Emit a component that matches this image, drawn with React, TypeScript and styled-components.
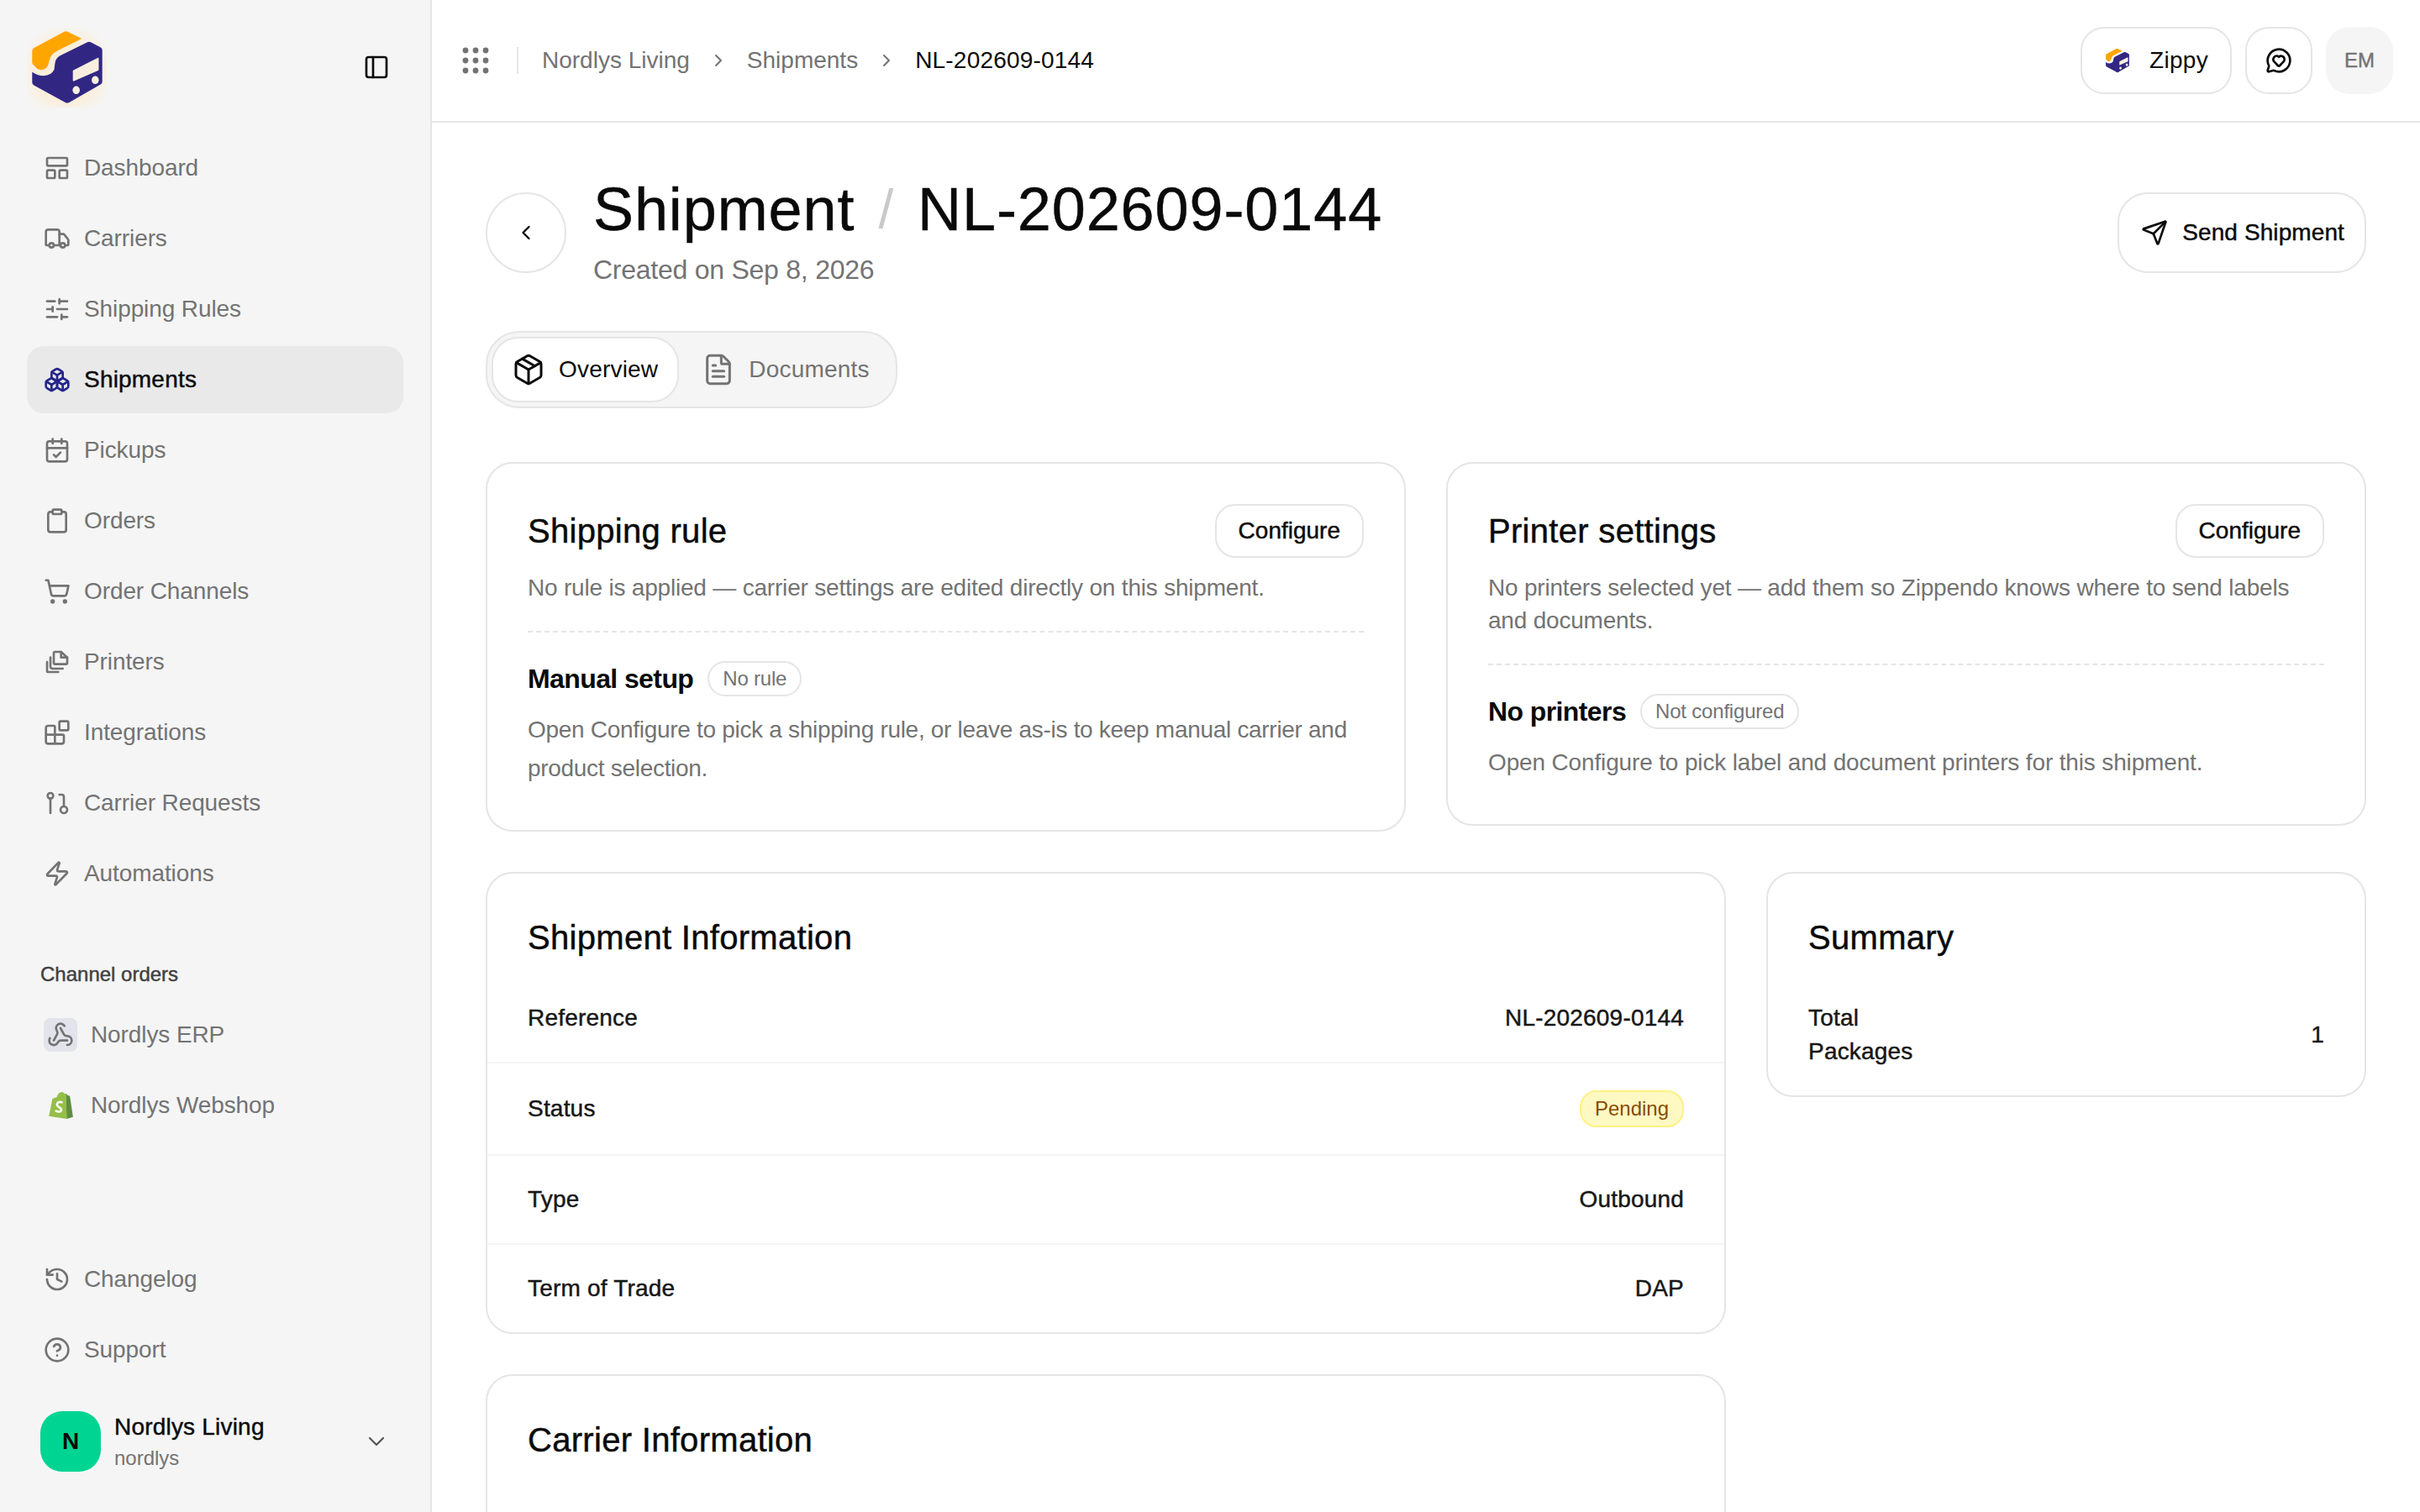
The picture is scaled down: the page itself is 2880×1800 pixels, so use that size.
import styled, { createGlobalStyle, css } from "styled-components";
import {
  Blocks,
  Boxes,
  CalendarCheck,
  ChevronDown,
  ChevronLeft,
  ChevronRight,
  CircleHelp,
  Clipboard,
  FileText,
  History,
  MessageCircleHeart,
  Package,
  PanelLeft,
  Send,
  ShoppingCart,
  SlidersHorizontal,
  Truck,
  Webhook,
  Zap,
} from "lucide-react";
import type { ReactNode } from "react";

const GlobalStyle = createGlobalStyle`
  html, body {
    margin: 0;
    padding: 0;
    background: #ffffff;
    overflow: hidden;
  }
  body {
    font-family: "Liberation Sans", Arial, sans-serif;
    color: #0a0a0a;
  }
  * {
    box-sizing: border-box;
  }
`;

// Liberation has no 500 weight, a hairline stroke stands in for it
const medium = css`
  -webkit-text-stroke: 0.45px currentColor;
`;

const Page = styled.div`
  display: flex;
  width: 2880px;
  height: 1800px;
  overflow: hidden;
`;

const Sidebar = styled.aside`
  flex: none;
  display: flex;
  flex-direction: column;
  width: 514px;
  height: 100%;
  background: #f5f5f5;
  border-right: 2px solid #e5e5e5;
`;

const SidebarHead = styled.div`
  flex: none;
  display: flex;
  align-items: center;
  justify-content: space-between;
  height: 160px;
  padding: 0 48px 0 32px;
  color: #0a0a0a;
`;

const NavList = styled.nav`
  display: flex;
  flex-direction: column;
  gap: 4px;
  padding: 0 32px;
`;

const NavItem = styled.a<{ $active?: boolean }>`
  display: flex;
  align-items: center;
  gap: 16px;
  height: 80px;
  padding: 0 20px;
  border-radius: 20px;
  font-size: 28px;
  letter-spacing: ${(p) => (p.$active ? "0.2px" : "-0.1px")};
  color: ${(p) => (p.$active ? "#0a0a0a" : "#737373")};
  background: ${(p) => (p.$active ? "#e9e9e9" : "transparent")};
  ${(p) => p.$active && medium}

  svg {
    flex: none;
    color: ${(p) => (p.$active ? "#25258c" : "#737373")};
  }
`;

const SectionLabel = styled.div`
  padding: 63px 48px 15px;
  font-size: 24px;
  line-height: 34px;
  color: #404040;
  ${medium}
`;

const ErpBadge = styled.span`
  flex: none;
  display: flex;
  align-items: center;
  justify-content: center;
  width: 40px;
  height: 40px;
  border-radius: 8px;
  background: #e2e3eb;
`;

const ShopifyBox = styled.span`
  flex: none;
  display: flex;
  align-items: center;
  justify-content: center;
  width: 40px;
  height: 40px;
`;

const SidebarFoot = styled.div`
  margin-top: auto;
  display: flex;
  flex-direction: column;
`;

const UserRow = styled.div`
  display: flex;
  align-items: center;
  gap: 16px;
  padding: 33px 48px 48px;
`;

const Avatar = styled.div`
  flex: none;
  display: flex;
  align-items: center;
  justify-content: center;
  width: 72px;
  height: 72px;
  border-radius: 26px;
  background: #00d492;
  font-size: 28px;
  font-weight: 700;
  color: #0a0a0a;
`;

const UserText = styled.div`
  flex: 1;
  display: flex;
  flex-direction: column;
  gap: 3px;
`;

const UserName = styled.div`
  font-size: 28px;
  line-height: 36px;
  letter-spacing: 0.2px;
  ${medium}
`;

const UserSlug = styled.div`
  font-size: 24px;
  line-height: 32px;
  color: #737373;
`;

const UserChevron = styled.span`
  display: flex;
  color: #525252;
`;

const Content = styled.div`
  flex: 1;
  min-width: 0;
  display: flex;
  flex-direction: column;
  height: 100%;
`;

const TopBar = styled.header`
  flex: none;
  display: flex;
  align-items: center;
  height: 146px;
  padding: 0 32px 0 36px;
  border-bottom: 2px solid #e5e5e5;
`;

const GridIcon = styled.span`
  display: flex;
  color: #737373;
`;

const BarDivider = styled.span`
  width: 2px;
  height: 32px;
  margin: 0 28px 0 33px;
  background: #e5e5e5;
`;

const Crumbs = styled.div`
  display: flex;
  align-items: center;
  gap: 22px;
  font-size: 28px;
  color: #737373;

  svg {
    color: #737373;
  }
`;

const CurrentCrumb = styled.span`
  color: #0a0a0a;
  letter-spacing: 0.2px;
`;

const BarActions = styled.div`
  margin-left: auto;
  display: flex;
  align-items: center;
  gap: 16px;
`;

const BarButton = styled.button<{ $square?: boolean }>`
  display: flex;
  align-items: center;
  justify-content: center;
  gap: 22px;
  height: 80px;
  width: ${(p) => (p.$square ? "80px" : "180px")};
  padding: 0;
  border: 2px solid #e5e5e5;
  border-radius: 28px;
  background: #ffffff;
  font: inherit;
  font-size: 28px;
  letter-spacing: 0.3px;
  color: #0a0a0a;
`;

const Initials = styled.div`
  display: flex;
  align-items: center;
  justify-content: center;
  width: 80px;
  height: 80px;
  border-radius: 28px;
  background: #f5f5f5;
  font-size: 24px;
  color: #737373;
  ${medium}
`;

const Main = styled.main`
  flex: 1;
  min-height: 0;
  overflow: hidden;
  padding: 63px 64px 0;
`;

const PageHeader = styled.div`
  display: flex;
  align-items: center;
  gap: 32px;
`;

const BackButton = styled.button`
  flex: none;
  display: flex;
  align-items: center;
  justify-content: center;
  width: 96px;
  height: 96px;
  padding: 0;
  border: 2px solid #e5e5e5;
  border-radius: 50%;
  background: #ffffff;
  color: #0a0a0a;
`;

const TitleBlock = styled.div`
  flex: 1;
`;

const TitleRow = styled.h1`
  display: flex;
  align-items: center;
  gap: 28px;
  margin: 0;
  font-size: 72px;
  font-weight: 400;
  line-height: 80px;
  letter-spacing: 0.9px;
  ${medium}
`;

const TitleSlash = styled.span`
  font-size: 64px;
  color: #c9c9c9;
  -webkit-text-stroke: 0;
`;

const Created = styled.p`
  margin: 8px 0 0;
  font-size: 32px;
  line-height: 48px;
  letter-spacing: -0.25px;
  color: #737373;
`;

const PrimaryAction = styled.button`
  flex: none;
  display: flex;
  align-items: center;
  gap: 17px;
  height: 96px;
  padding: 0 24px 0 26px;
  border: 2px solid #e5e5e5;
  border-radius: 36px;
  background: #ffffff;
  font: inherit;
  font-size: 28px;
  letter-spacing: 0.1px;
  color: #0a0a0a;
  ${medium}
`;

const Tabs = styled.div`
  display: inline-flex;
  align-items: center;
  gap: 4px;
  height: 92px;
  margin-top: 49px;
  padding: 0 5px;
  border: 2px solid #e5e5e5;
  border-radius: 40px;
  background: #f5f5f5;
`;

const Tab = styled.div<{ $active?: boolean }>`
  display: flex;
  align-items: center;
  gap: 16px;
  height: 78px;
  padding: ${(p) => (p.$active ? "0 23px 0 22px" : "0 24px 0 21px")};
  border: 2px solid ${(p) => (p.$active ? "#e5e5e5" : "transparent")};
  border-radius: 32px;
  background: ${(p) => (p.$active ? "#ffffff" : "transparent")};
  font-size: 28px;
  letter-spacing: 0.2px;
  color: ${(p) => (p.$active ? "#0a0a0a" : "#737373")};
`;

const TopCards = styled.div`
  display: grid;
  grid-template-columns: 1fr 1fr;
  align-items: start;
  gap: 48px;
  margin-top: 64px;
`;

const InfoCards = styled.div`
  display: grid;
  grid-template-columns: 1fr 714px;
  align-items: start;
  gap: 48px;
  margin-top: 48px;
`;

const InfoColumn = styled.div`
  display: flex;
  flex-direction: column;
  gap: 48px;
`;

const Card = styled.section`
  border: 2px solid #e5e5e5;
  border-radius: 32px;
  background: #ffffff;
`;

const SettingCard = styled(Card)`
  padding: 48px;
`;

const CardHead = styled.div`
  display: flex;
  align-items: center;
  justify-content: space-between;
`;

const CardTitle = styled.h2`
  margin: 0;
  font-size: 40px;
  font-weight: 400;
  line-height: 56px;
  letter-spacing: 0.3px;
  ${medium}
`;

const ConfigureButton = styled.button`
  flex: none;
  height: 64px;
  padding: 0 26px;
  border: 2px solid #e5e5e5;
  border-radius: 24px;
  background: #ffffff;
  font: inherit;
  font-size: 28px;
  color: #0a0a0a;
  ${medium}
`;

const CardNote = styled.p`
  margin: 16px 0 0;
  padding-bottom: 32px;
  border-bottom: 2px dashed #e5e5e5;
  font-size: 28px;
  line-height: 39.2px;
  letter-spacing: -0.2px;
  color: #737373;
`;

const StateRow = styled.div`
  display: flex;
  align-items: center;
  gap: 17px;
  margin-top: 34px;
`;

const StateName = styled.span`
  font-size: 32px;
  font-weight: 700;
  letter-spacing: -0.6px;
`;

const OutlinePill = styled.span`
  display: inline-flex;
  align-items: center;
  height: 42px;
  padding: 0 16px;
  border: 2px solid #e5e5e5;
  border-radius: 21px;
  font-size: 24px;
  letter-spacing: -0.2px;
  color: #737373;
`;

const StateHint = styled.p<{ $tight?: boolean }>`
  margin: 17px 0 0;
  padding-bottom: 2px;
  font-size: 28px;
  line-height: 46px;
  letter-spacing: ${(p) => (p.$tight ? "-0.3px" : "-0.15px")};
  color: #737373;
`;

const InfoHead = styled.div`
  padding: 48px 48px 16px;
`;

const InfoRow = styled.div`
  display: flex;
  align-items: center;
  justify-content: space-between;
  padding: 32px 48px;
  border-bottom: 2px solid #f5f5f5;

  &:last-child {
    border-bottom: 0;
  }
`;

const InfoText = styled.span<{ $narrow?: boolean }>`
  font-size: 28px;
  line-height: 40px;
  letter-spacing: 0.2px;
  color: #171717;
  ${medium}
  ${(p) => p.$narrow && "width: 160px;"}
`;

const StatusPill = styled.span`
  display: inline-flex;
  align-items: center;
  height: 44px;
  padding: 0 16px;
  border: 2px solid #fff085;
  border-radius: 20px;
  background: #fef9c2;
  font-size: 24px;
  color: #894b00;
`;

const CarrierCard = styled(Card)`
  height: 300px;
`;

function Logo({ size, glow }: { size: number; glow?: boolean }) {
  return (
    <svg width={size} height={size} viewBox="0 0 96 96">
      {glow && (
        <>
          <defs>
            <radialGradient id="logoGlow" cx="50%" cy="55%" r="60%">
              <stop offset="60%" stopColor="#fbeeda" />
              <stop offset="100%" stopColor="#f5f5f5" />
            </radialGradient>
          </defs>
          <rect width="96" height="96" fill="url(#logoGlow)" />
        </>
      )}
      <path
        d="M8.500 25 44 6q2.600-1.300 5 0l16.300 8L36 28.500q-5 2.500-8 7.500l-2 6.500q-1 6.500-6.500 8.300-3.500 1-7-.8L8.500 46q-2.200-1.300-2.200-3.500V28.500q0-2.300 2.200-3.500Z"
        fill="#ffa500"
      />
      <path
        d="M72 18.200q2-1 4 0l11.500 6q2.200 1.200 2.200 3.500v37.600q0 2.200-2 3.300L50.300 90q-2.300 1.200-4.600 0L8.300 69.500q-2-1.200-2-3.200V53.700q7 4.500 13.500 4.500 9.500-.5 12.700-7.500l.8-6.500q.6-6.500 5.700-9.700Z"
        fill="#312783"
      />
      <path
        d="M56 51.200 84 37q1.500-.6 1.500 1v12.800q0 .8-.8 1.200L56 64.500q-1.300.5-1.300-1V52.500q0-.9 1.300-1.300Z"
        fill="#f8eee0"
      />
      <ellipse cx="58.700" cy="75.300" rx="4.300" ry="4.800" fill="#f8eee0" />
      <ellipse cx="81.300" cy="63.300" rx="4.300" ry="4.800" fill="#f8eee0" />
    </svg>
  );
}

function DashboardIcon() {
  return (
    <svg width="32" height="32" viewBox="0 0 24 24" fill="none" stroke="currentColor" strokeWidth="2" strokeLinejoin="round">
      <rect x="3" y="3" width="18" height="7" rx="1" />
      <rect x="3" y="14" width="7" height="7" rx="1" />
      <rect x="14" y="14" width="7" height="7" rx="1" />
    </svg>
  );
}

function PrintersIcon() {
  return (
    <svg width="32" height="32" viewBox="0 0 24 24" fill="none" stroke="currentColor" strokeWidth="2" strokeLinecap="round" strokeLinejoin="round">
      <path d="M10 3h5.500L21 8v5a1 1 0 0 1-1 1H10a1 1 0 0 1-1-1V4a1 1 0 0 1 1-1Z" />
      <path d="M15.500 3v5H21" />
      <path d="M6 8v8a2 2 0 0 0 2 2h9" />
      <path d="M3 12v8a1 1 0 0 0 1 1h9" />
    </svg>
  );
}

function RequestsIcon() {
  return (
    <svg width="32" height="32" viewBox="0 0 24 24" fill="none" stroke="currentColor" strokeWidth="2" strokeLinecap="round">
      <circle cx="6" cy="5.500" r="2.500" />
      <path d="M6 8v13" />
      <path d="M14 4.500h2a2 2 0 0 1 2 2V15" />
      <circle cx="18" cy="18" r="3" />
    </svg>
  );
}

function GripDots() {
  const spots = [4, 16, 28];
  return (
    <svg width="32" height="32" viewBox="0 0 32 32" fill="currentColor">
      {spots.map((y) => spots.map((x) => <circle key={`${x}-${y}`} cx={x} cy={y} r="3.400" />))}
    </svg>
  );
}

function ShopifyMark() {
  return (
    <svg width="30" height="34" viewBox="0 0 28 32">
      <path d="M1 28 5 8.500l5-2C11 3 13 1 15.500 1c1.500 0 2.500 1 3 2l1.500-.3L21 31Z" fill="#95bf47" />
      <path d="m20 2.700 2.500 2.300 2 .3L28 29l-7 2Z" fill="#5e8e3e" />
      <path d="M15.500 12.500c-2.500-1-5.500 0-5.500 2.500 0 3 5 3 5 6 0 2.500-3.500 2.500-6 1.200" fill="none" stroke="#ffffff" strokeWidth="2.400" strokeLinecap="round" />
    </svg>
  );
}

interface INavEntry {
  label: string;
  icon: ReactNode;
  active?: boolean;
}

const mainNav: INavEntry[] = [
  { label: "Dashboard", icon: <DashboardIcon /> },
  { label: "Carriers", icon: <Truck size={32} /> },
  { label: "Shipping Rules", icon: <SlidersHorizontal size={32} /> },
  { label: "Shipments", icon: <Boxes size={32} />, active: true },
  { label: "Pickups", icon: <CalendarCheck size={32} /> },
  { label: "Orders", icon: <Clipboard size={32} /> },
  { label: "Order Channels", icon: <ShoppingCart size={32} /> },
  { label: "Printers", icon: <PrintersIcon /> },
  { label: "Integrations", icon: <Blocks size={32} /> },
  { label: "Carrier Requests", icon: <RequestsIcon /> },
  { label: "Automations", icon: <Zap size={32} /> },
];

const shipmentInfo = [
  { label: "Reference", value: "NL-202609-0144" },
  { label: "Status", value: <StatusPill>Pending</StatusPill> },
  { label: "Type", value: "Outbound" },
  { label: "Term of Trade", value: "DAP" },
];

export default function App() {
  return (
    <Page>
      <GlobalStyle />
      <Sidebar>
        <SidebarHead>
          <Logo size={96} glow />
          <PanelLeft size={32} />
        </SidebarHead>
        <NavList>
          {mainNav.map((item) => (
            <NavItem key={item.label} $active={item.active}>
              {item.icon}
              {item.label}
            </NavItem>
          ))}
        </NavList>
        <SectionLabel>Channel orders</SectionLabel>
        <NavList>
          <NavItem>
            <ErpBadge>
              <Webhook size={32} />
            </ErpBadge>
            Nordlys ERP
          </NavItem>
          <NavItem>
            <ShopifyBox>
              <ShopifyMark />
            </ShopifyBox>
            Nordlys Webshop
          </NavItem>
        </NavList>
        <SidebarFoot>
          <NavList>
            <NavItem>
              <History size={32} />
              Changelog
            </NavItem>
            <NavItem>
              <CircleHelp size={32} />
              Support
            </NavItem>
          </NavList>
          <UserRow>
            <Avatar>N</Avatar>
            <UserText>
              <UserName>Nordlys Living</UserName>
              <UserSlug>nordlys</UserSlug>
            </UserText>
            <UserChevron>
              <ChevronDown size={32} strokeWidth={1.6} />
            </UserChevron>
          </UserRow>
        </SidebarFoot>
      </Sidebar>

      <Content>
        <TopBar>
          <GridIcon>
            <GripDots />
          </GridIcon>
          <BarDivider />
          <Crumbs>
            <span>Nordlys Living</span>
            <ChevronRight size={24} />
            <span>Shipments</span>
            <ChevronRight size={24} />
            <CurrentCrumb>NL-202609-0144</CurrentCrumb>
          </Crumbs>
          <BarActions>
            <BarButton>
              <Logo size={32} />
              Zippy
            </BarButton>
            <BarButton $square>
              <MessageCircleHeart size={32} />
            </BarButton>
            <Initials>EM</Initials>
          </BarActions>
        </TopBar>

        <Main>
          <PageHeader>
            <BackButton>
              <ChevronLeft size={28} />
            </BackButton>
            <TitleBlock>
              <TitleRow>
                Shipment
                <TitleSlash>/</TitleSlash>
                NL-202609-0144
              </TitleRow>
              <Created>Created on Sep 8, 2026</Created>
            </TitleBlock>
            <PrimaryAction>
              <Send size={32} />
              Send Shipment
            </PrimaryAction>
          </PageHeader>

          <Tabs>
            <Tab $active>
              <Package size={40} strokeWidth={1.8} />
              Overview
            </Tab>
            <Tab>
              <FileText size={40} strokeWidth={1.8} />
              Documents
            </Tab>
          </Tabs>

          <TopCards>
            <SettingCard>
              <CardHead>
                <CardTitle>Shipping rule</CardTitle>
                <ConfigureButton>Configure</ConfigureButton>
              </CardHead>
              <CardNote>No rule is applied — carrier settings are edited directly on this shipment.</CardNote>
              <StateRow>
                <StateName>Manual setup</StateName>
                <OutlinePill>No rule</OutlinePill>
              </StateRow>
              <StateHint $tight>Open Configure to pick a shipping rule, or leave as-is to keep manual carrier and product selection.</StateHint>
            </SettingCard>
            <SettingCard>
              <CardHead>
                <CardTitle>Printer settings</CardTitle>
                <ConfigureButton>Configure</ConfigureButton>
              </CardHead>
              <CardNote>No printers selected yet — add them so Zippendo knows where to send labels and documents.</CardNote>
              <StateRow>
                <StateName>No printers</StateName>
                <OutlinePill>Not configured</OutlinePill>
              </StateRow>
              <StateHint>Open Configure to pick label and document printers for this shipment.</StateHint>
            </SettingCard>
          </TopCards>

          <InfoCards>
            <InfoColumn>
              <Card>
                <InfoHead>
                  <CardTitle>Shipment Information</CardTitle>
                </InfoHead>
                {shipmentInfo.map((row) => (
                  <InfoRow key={row.label}>
                    <InfoText>{row.label}</InfoText>
                    {typeof row.value === "string" ? <InfoText>{row.value}</InfoText> : row.value}
                  </InfoRow>
                ))}
              </Card>
              <CarrierCard>
                <InfoHead>
                  <CardTitle>Carrier Information</CardTitle>
                </InfoHead>
              </CarrierCard>
            </InfoColumn>
            <Card>
              <InfoHead>
                <CardTitle>Summary</CardTitle>
              </InfoHead>
              <InfoRow>
                <InfoText $narrow>Total Packages</InfoText>
                <InfoText>1</InfoText>
              </InfoRow>
            </Card>
          </InfoCards>
        </Main>
      </Content>
    </Page>
  );
}
